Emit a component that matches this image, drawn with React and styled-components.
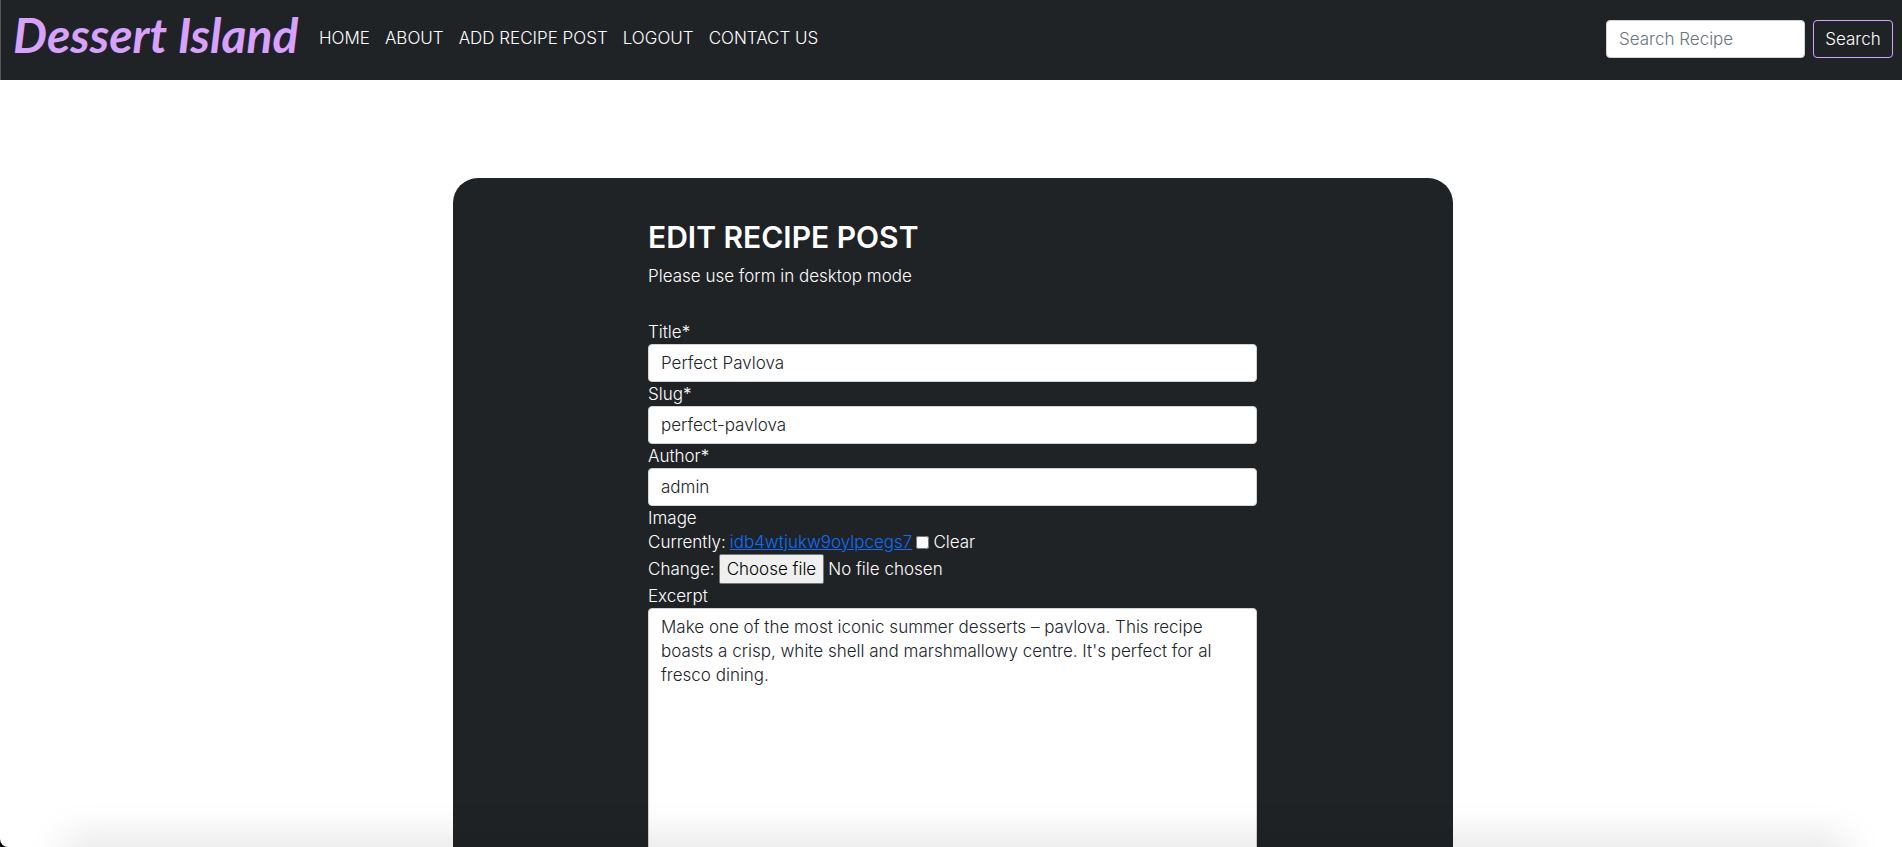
import React from "react";
import styled, { createGlobalStyle } from "styled-components";

const GlobalStyle = createGlobalStyle`
  *, *::before, *::after { box-sizing: border-box; }
  html, body { margin: 0; height: 100%; }
  html { background: #000; }
  body {
    overflow: hidden;
    color: #212529;
    font-family: Inter, "Liberation Sans", sans-serif;
    font-size: 17px;
    font-weight: 300;
    line-height: 24px;
  }
  #root { height: 100%; }
  button, input, textarea { font: inherit; }
`;

const Page = styled.div`
  position: relative;
  height: 100%;
  overflow: hidden;
  background: #fff;
  border-bottom-left-radius: 8px;
`;

const Navbar = styled.header`
  display: flex;
  align-items: flex-start;
  height: 80px;
  padding: 0 9px 0 12px;
  background: #1f2326;
  border-left: 1px solid #55595c;
`;

const Brand = styled.a`
  width: 290px;
  color: #d8a0ff;
  font-family: Lato, "Liberation Sans", sans-serif;
  font-size: 48px;
  font-style: italic;
  font-weight: 700;
  line-height: 70px;
  text-decoration: none;
  white-space: nowrap;
`;

const NavLinks = styled.nav`
  display: flex;
  gap: 15px;
  flex: 1;
  padding: 26px 0 0 16px;
`;

const NavLink = styled.a`
  color: #fff;
  text-decoration: none;
  white-space: nowrap;
`;

const SearchForm = styled.form`
  display: flex;
  gap: 8px;
  padding-top: 20px;
`;

const Control = styled.input`
  display: block;
  width: ${(p) => p.$width || "100%"};
  height: 38px;
  padding: 6px 12px;
  color: #212529;
  background: #fff;
  border: 1px solid #ced4da;
  border-radius: 4px;
  outline: 0;
  &::placeholder { color: #6c757d; opacity: 1; }
`;

const SearchButton = styled.button`
  width: 80px;
  height: 38px;
  padding: 0;
  color: #fff;
  background: transparent;
  border: 1px solid #d8a0ff;
  border-radius: 4px;
`;

const Main = styled.main`
  display: flex;
  justify-content: center;
  padding: 98px 0 48px 4px;
`;

const Card = styled.section`
  width: 1000px;
  max-width: 100%;
  padding: 40px 196px 48px 195px;
  color: #fff;
  background: #1f2326;
  border-radius: 25px;
`;

const Title = styled.h1`
  margin: 0 0 8px;
  font-size: 30px;
  font-weight: 600;
  line-height: 38px;
  white-space: nowrap;
`;

const Hint = styled.p`
  margin: 0 0 32px;
`;

const Label = styled.label`
  display: block;
`;

const FileRow = styled.div`
  display: flex;
  align-items: center;
  gap: ${(p) => p.$gap};
`;

const FileLink = styled.a`
  color: #0d6efd;
  text-decoration: underline;
`;

const Checkbox = styled.input`
  width: 13px;
  height: 13px;
  margin: 0;
`;

const FileInput = styled.input`
  position: absolute;
  width: 1px;
  height: 1px;
  opacity: 0;
`;

const FileButton = styled.label`
  padding: 2px 7px;
  color: #000;
  background: #efefef;
  border: 1px solid #767676;
  border-radius: 2px;
`;

const TextArea = styled.textarea`
  display: block;
  width: 100%;
  height: 256px;
  padding: 6px 12px;
  color: #212529;
  background: #fff;
  border: 1px solid #ced4da;
  border-radius: 4px;
  outline: 0;
  resize: none;
`;

const BottomShade = styled.div`
  position: absolute;
  right: 64px;
  bottom: -20px;
  left: 72px;
  height: 20px;
  box-shadow: 0 0 40px 8px rgba(0, 0, 0, 0.12);
  pointer-events: none;
`;

const links = ["HOME", "ABOUT", "ADD RECIPE POST", "LOGOUT", "CONTACT US"];

const fields = [
  { id: "title", label: "Title*", value: "Perfect Pavlova" },
  { id: "slug", label: "Slug*", value: "perfect-pavlova" },
  { id: "author", label: "Author*", value: "admin" },
];

const excerpt =
  "Make one of the most iconic summer desserts – pavlova. This recipe boasts a crisp, white shell and marshmallowy centre. It's perfect for al fresco dining.";

export default function App() {
  return (
    <Page>
      <GlobalStyle />
      <Navbar>
        <Brand href="#">Dessert Island</Brand>
        <NavLinks>
          {links.map((text) => (
            <NavLink href="#" key={text}>{text}</NavLink>
          ))}
        </NavLinks>
        <SearchForm>
          <Control $width="199px" type="search" placeholder="Search Recipe" aria-label="Search Recipe" />
          <SearchButton type="submit">Search</SearchButton>
        </SearchForm>
      </Navbar>
      <Main>
        <Card>
          <Title>EDIT RECIPE POST</Title>
          <Hint>Please use form in desktop mode</Hint>
          <form>
            {fields.map((field) => (
              <div key={field.id}>
                <Label htmlFor={field.id}>{field.label}</Label>
                <Control id={field.id} type="text" defaultValue={field.value} />
              </div>
            ))}
            <Label htmlFor="image">Image</Label>
            <FileRow $gap="4px">
              <span>Currently:</span>
              <FileLink href="#">idb4wtjukw9oylpcegs7</FileLink>
              <Checkbox id="clear" type="checkbox" />
              <label htmlFor="clear">Clear</label>
            </FileRow>
            <FileRow $gap="4px">
              <span>Change:</span>
              <FileInput id="image" type="file" />
              <FileButton htmlFor="image">Choose file</FileButton>
              <span>No file chosen</span>
            </FileRow>
            <Label htmlFor="excerpt">Excerpt</Label>
            <TextArea id="excerpt" defaultValue={excerpt} />
          </form>
        </Card>
      </Main>
      <BottomShade />
    </Page>
  );
}
